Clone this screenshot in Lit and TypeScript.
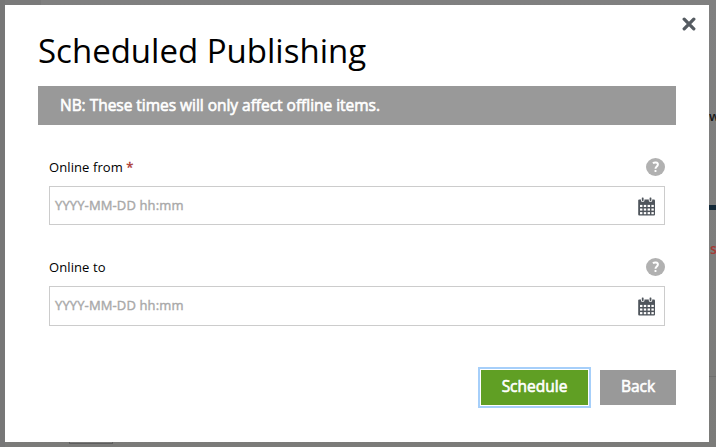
import { LitElement, html, css, svg } from "lit";
import { customElement, property } from "lit/decorators.js";

@customElement("date-field")
class DateField extends LitElement {
  @property() label = "";
  @property({ type: Boolean }) required = false;
  @property({ type: Number }) boxHeight = 39;

  static styles = css`
    :host { display: block; }
    .head { display: flex; justify-content: space-between; align-items: center; height: 18px; }
    .label { font-size: 13px; line-height: 18px; letter-spacing: 0.09px; color: #000; }
    .star { color: #a8322c; -webkit-text-stroke: 0.3px #a8322c; }
    .help { display: block; width: 19px; height: 18px; }
    .box {
      display: flex; align-items: flex-start; justify-content: space-between;
      box-sizing: border-box; margin-top: 10px; padding: 9px 8px 0 5px;
      border: 1px solid #ccc; background: #fff;
    }
    .tall { height: 40px; }
    .short { height: 39px; }
    .hint { font-size: 13px; line-height: 18px; letter-spacing: 0.13px; color: #a9a9a9; -webkit-text-stroke: 0.4px #a9a9a9; }
    .cal { display: block; width: 19px; height: 19px; margin-top: 1px; }
  `;

  render() {
    const cells = [0, 1, 2, 3].flatMap((c) =>
      [0, 1, 2].map((r) => svg`<rect x=${3 + c * 3.8} y=${7.9 + r * 3.6} width="2.4" height="2.1" fill="#fff"></rect>`)
    );
    return html`
      <div class="head">
        <span class="label">${this.label}${this.required ? html` <span class="star">*</span>` : ""}</span>
        <svg class="help" viewBox="0 0 19 18">
          <ellipse cx="9.5" cy="9" rx="9.5" ry="9" fill="#b1b1b1"></ellipse>
          <path d="M6.9 5.3C8.4 4.2 11.9 4.1 11.9 6.6C11.9 8.6 9.5 8.5 9.5 10.7" fill="none" stroke="#fff" stroke-width="2"></path>
          <rect x="8.4" y="12" width="2.2" height="2.1" rx=".8" fill="#fff"></rect>
        </svg>
      </div>
      <div class="box ${this.boxHeight > 39 ? "tall" : "short"}">
        <span class="hint">YYYY-MM-DD hh:mm</span>
        <svg class="cal" viewBox="0 0 19 19">
          <rect x="1.2" y="2.5" width="16.8" height="16" rx="1" fill="#4f555c"></rect>
          ${cells}
          <rect x="4" y="1" width="3.4" height="3.8" rx="1" fill="#fff"></rect>
          <rect x="11.8" y="1" width="3.4" height="3.8" rx="1" fill="#fff"></rect>
          <rect x="4.8" y="0.4" width="1.8" height="3.5" rx=".6" fill="#4f555c"></rect>
          <rect x="12.6" y="0.4" width="1.8" height="3.5" rx=".6" fill="#4f555c"></rect>
        </svg>
      </div>
    `;
  }
}

@customElement("app-root")
class AppRoot extends LitElement {
  static styles = css`
    :host {
      display: block; position: relative; box-sizing: border-box; width: 716px; height: 447px;
      padding: 5px 7px 5px 5px; overflow: hidden;
      background: linear-gradient(#808080 0, #7b7b79 100%);
      font-family: "Open Sans", "Noto Sans", sans-serif;
    }
    .edge { position: absolute; left: 0; top: 0; width: 41px; height: 5px; background: #7a7a7a; }
    .side { position: absolute; left: 0; top: 0; width: 5px; height: 447px; background: #777; }
    .bar { position: absolute; left: 709px; top: 205px; width: 7px; height: 5px; background: #142938; }
    .rule { position: absolute; left: 709px; top: 376px; width: 7px; height: 1px; background: #6f6f6f; }
    .tab { position: absolute; left: 69px; top: 439px; width: 42px; height: 3px; border: 1px solid #5e5e5e; }
    .peek { position: absolute; left: 709px; font-size: 13px; line-height: 18px; font-weight: 600; }
    .w { top: 107px; color: #171717; }
    .s { top: 240px; left: 710px; font-size: 14px; color: #a53a35; }
    .modal {
      position: relative; box-sizing: border-box; width: 704px; height: 437px;
      padding: 22px 33px 0; background: #fff;
    }
    .close { position: absolute; left: 677px; top: 12px; width: 14px; height: 14px; }
    .title { margin: 0; height: 59px; font-size: 33px; line-height: 48px; font-weight: 400; color: #000; white-space: nowrap; }
    .note {
      height: 39px; box-sizing: border-box; padding: 0 22px; background: #999; color: #fff;
      font-size: 15.5px; line-height: 38px; letter-spacing: -0.03px; white-space: nowrap; -webkit-text-stroke: 0.6px #fff;
    }
    .fields { display: flex; flex-direction: column; gap: 33px; padding: 33px 11px 0; }
    .actions { display: flex; justify-content: flex-end; gap: 12px; margin-top: 44px; }
    .btn {
      display: block; height: 35px; padding: 0 0 2px; border: 0; color: #fff; font-family: inherit;
      font-size: 15.5px; line-height: 33px; text-align: center; -webkit-text-stroke: 0.6px #fff;
    }
    .go { width: 107px; background: #609f24; border-radius: 0; box-shadow: 0 0 0 1px #fff, 0 0 0 3px #a6cffa; }
    .back { width: 76px; background: #999; }
  `;

  render() {
    return html`
      <div class="edge"></div>
      <div class="side"></div>
      <div class="bar"></div>
      <div class="rule"></div>
      <div class="tab"></div>
      <span class="peek w">w</span>
      <span class="peek s">s</span>
      <div class="modal">
        <svg class="close" viewBox="0 0 14 14">
          <path d="M2.2 2.2L11.8 11.8M11.8 2.2L2.2 11.8" stroke="#555b61" stroke-width="3.3" stroke-linecap="round"></path>
        </svg>
        <h1 class="title">Scheduled Publishing</h1>
        <div class="note">NB: These times will only affect offline items.</div>
        <div class="fields">
          <date-field label="Online from" required></date-field>
          <date-field label="Online to" .boxHeight=${40}></date-field>
        </div>
        <div class="actions">
          <button class="btn go">Schedule</button>
          <button class="btn back">Back</button>
        </div>
      </div>
    `;
  }
}
